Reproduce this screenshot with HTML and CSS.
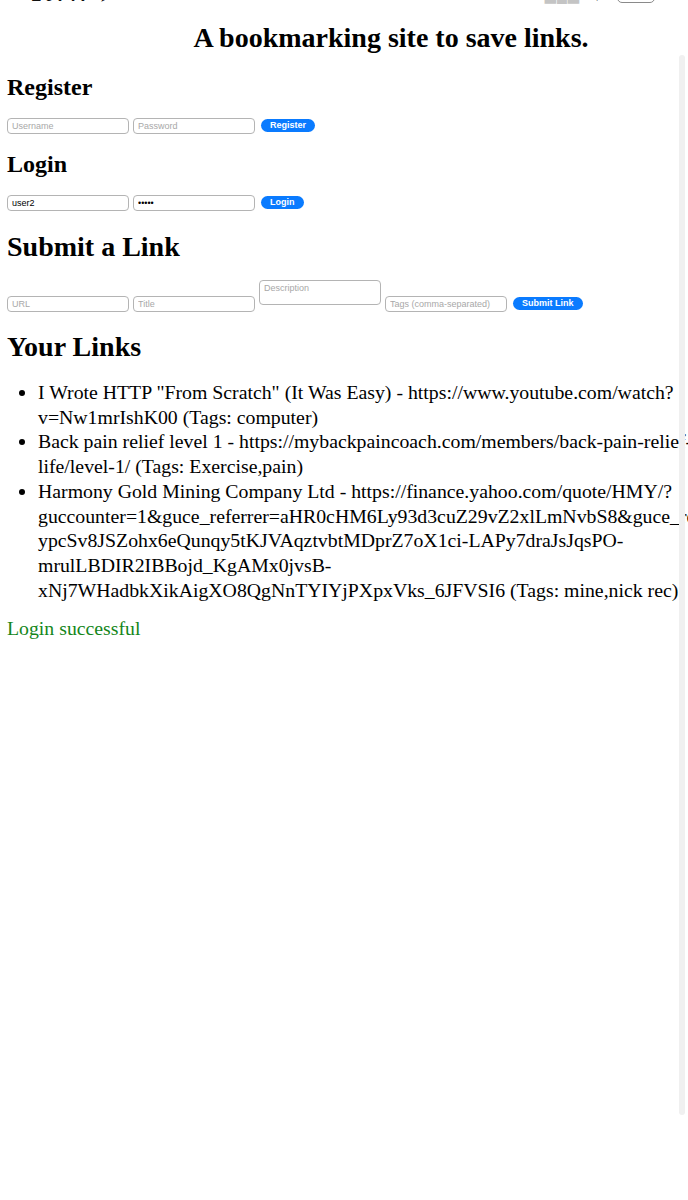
FILE: index.html
```html
<!DOCTYPE html>
<html lang="en">
<head>
  <meta charset="UTF-8">
  <meta name="viewport" content="width=device-width, initial-scale=1.0">
  <title>Bookmarks</title>
  <link rel="stylesheet" href="styles.css">
</head>
<body>
  <div class="status-bar">
    <span class="status-time">10:47 ➤</span>
    <span class="status-signal">▂▄▆</span>
    <span class="status-wifi">◥</span>
    <span class="status-battery"></span>
  </div>

  <div class="page">
    <h1>A bookmarking site to save links.</h1>

    <h3>Register</h3>
    <div class="form-row">
      <input type="text" id="regUsername" placeholder="Username">
      <input type="password" id="regPassword" placeholder="Password">
      <button id="registerBtn">Register</button>
    </div>

    <h3>Login</h3>
    <div class="form-row">
      <input type="text" id="loginUsername" placeholder="Username" value="user2">
      <input type="password" id="loginPassword" placeholder="Password" value="12345">
      <button id="loginBtn">Login</button>
    </div>

    <h2>Submit a Link</h2>
    <div class="form-row">
      <input type="text" id="url" placeholder="URL">
      <input type="text" id="title" placeholder="Title">
      <textarea id="description" placeholder="Description"></textarea>
      <input type="text" id="tags" placeholder="Tags (comma-separated)">
      <button id="submitBtn">Submit Link</button>
    </div>

    <h2 class="links-title">Your Links</h2>
    <ul id="links">
      <li>I Wrote HTTP "From Scratch" (It Was Easy) - https://www.youtube.com/watch?<br>v=Nw1mrIshK00 (Tags: computer)</li>
      <li>Back pain relief level 1 - https://mybackpaincoach.com/members/back-pain-relief-<br>life/level-1/ (Tags: Exercise,pain)</li>
      <li>Harmony Gold Mining Company Ltd - https://finance.yahoo.com/quote/HMY/?<br>guccounter=1&amp;guce_referrer=aHR0cHM6Ly93d3cuZ29vZ2xlLmNvbS8&amp;guce_referrer_sig=AQAAAJ4kz0Wq-<br>ypcSv8JSZohx6eQunqy5tKJVAqztvbtMDprZ7oX1ci-LAPy7draJsJqsPO-<br>mrulLBDIR2IBBojd_KgAMx0jvsB-<br>xNj7WHadbkXikAigXO8QgNnTYIYjPXpxVks_6JFVSI6 (Tags: mine,nick rec)</li>
    </ul>

    <p class="message" id="message">Login successful</p>
  </div>

  <div class="scroll-indicator"></div>
</body>
</html>
```

FILE: styles.css
```css
html, body {
  margin: 0;
  padding: 0;
  overflow-x: hidden;
  background: #fff;
}

body {
  font-family: "Liberation Serif", "Times New Roman", serif;
  color: #000;
}

/* top strip of the phone status bar, mostly cut off */
.status-bar {
  position: absolute;
  top: -15px;
  left: 0;
  width: 688px;
  height: 20px;
  font-family: "Liberation Sans", Arial, sans-serif;
  font-weight: bold;
  font-size: 18px;
  line-height: 20px;
}

.status-time {
  position: absolute;
  left: 31px;
  letter-spacing: 3px;
  color: #111;
}

.status-signal {
  position: absolute;
  left: 545px;
  font-size: 14px;
  color: #c4c4c4;
  letter-spacing: 1px;
}

.status-wifi {
  position: absolute;
  left: 588px;
  font-size: 12px;
  color: #222;
}

.status-battery {
  position: absolute;
  left: 617px;
  top: 1px;
  width: 38px;
  height: 17px;
  border: 1.5px solid #8a8a8a;
  border-radius: 5px;
  box-sizing: border-box;
}

.page {
  width: 768px;
  padding: 0 7px 40px 7px;
}

h1 {
  font-size: 28px;
  line-height: 32px;
  margin: 22px 0 0 0;
  text-align: center;
}

h3 {
  font-size: 24px;
  line-height: 28px;
  margin: 19px 0 0 0;
}

h2 {
  font-size: 28px;
  line-height: 32px;
  margin: 20px 0 0 0;
}

.links-title {
  margin-top: 19px;
}

.form-row {
  display: flex;
  align-items: flex-end;
  gap: 4px;
  margin-top: 17px;
}

.form-row + h3 {
  margin-top: 16px;
}

input, textarea {
  width: 122px;
  height: 16px;
  padding: 0 4px;
  margin: 0;
  border: 1px solid #b4b4b4;
  border-radius: 4px;
  box-sizing: border-box;
  background: #fff;
  font-family: "Liberation Sans", Arial, sans-serif;
  font-size: 9px;
  color: #000;
  outline: none;
}

input::placeholder, textarea::placeholder {
  color: #a8a8a8;
}

textarea {
  height: 25px;
  padding: 2px 4px;
  margin-bottom: 7px;
  resize: none;
}

button {
  height: 13px;
  padding: 0 9px;
  margin: 0 0 2px 2px;
  border: none;
  border-radius: 7px;
  background: #0a7bff;
  color: #fff;
  font-family: "Liberation Sans", Arial, sans-serif;
  font-weight: bold;
  font-size: 9px;
  line-height: 13px;
  cursor: pointer;
}

ul {
  margin: 17px 0 0 0;
  padding-left: 31px;
  font-size: 19.8px;
  line-height: 24.7px;
}

li {
  white-space: nowrap;
}

.message {
  margin: 14px 0 0 0;
  font-size: 19.8px;
  line-height: 24.7px;
  color: #14861a;
}

.scroll-indicator {
  position: absolute;
  left: 679px;
  top: 55px;
  width: 6px;
  height: 1060px;
  border-radius: 3px;
  background: #f0f0f0;
}
```
